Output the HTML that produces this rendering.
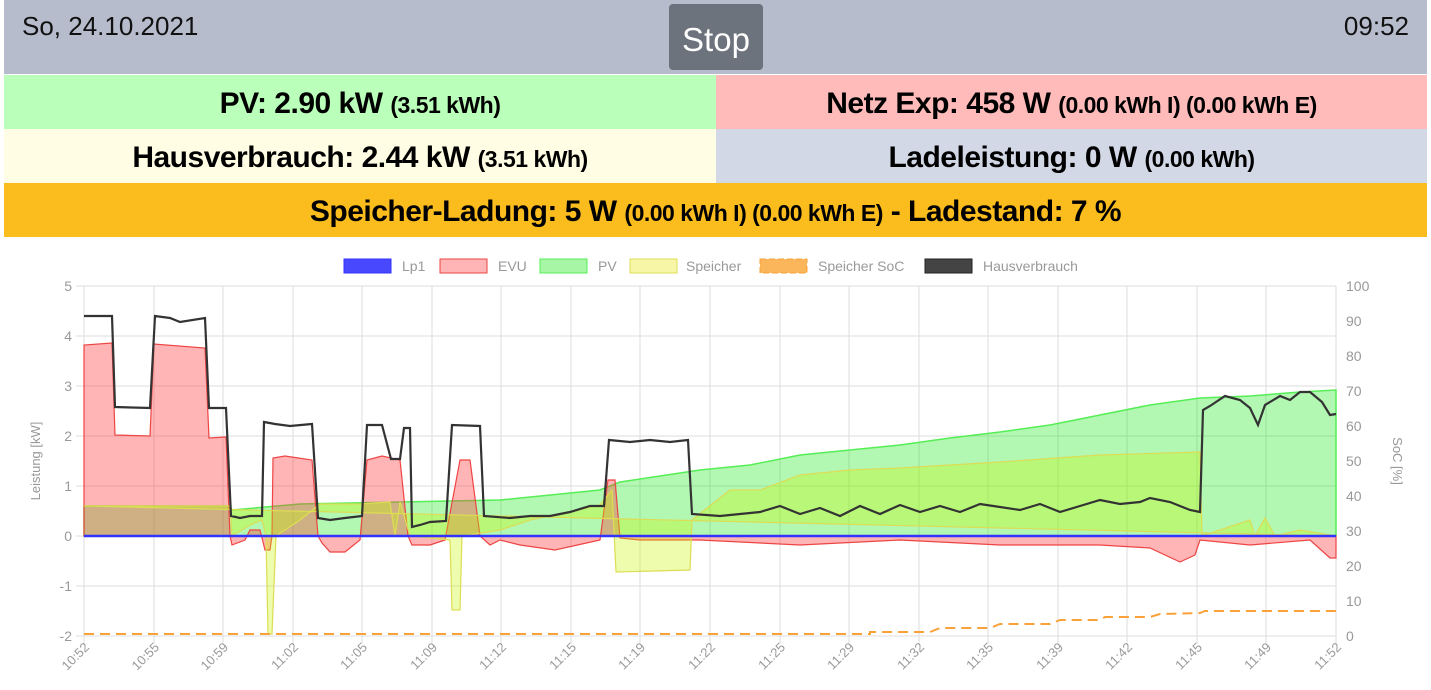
<!DOCTYPE html>
<html><head><meta charset="utf-8"><style>
body{margin:0;width:1431px;height:690px;background:#fff;font-family:"Liberation Sans",sans-serif;overflow:hidden;position:relative}
.top{position:absolute;left:4px;top:0;width:1423px;height:74px;background:#b6bccb}
.date{position:absolute;left:18px;top:11px;font-size:26px;color:#111}
.time{position:absolute;right:18px;top:11px;font-size:26px;color:#111}
.stop{position:absolute;left:665px;top:4px;width:94px;height:66px;background:#6c737c;border-radius:4px;color:#fff;font-size:33px;text-align:center;line-height:72px}
.row{position:absolute;height:54px;font-weight:bold;font-size:30px;text-align:center;line-height:58px;color:#000;letter-spacing:-0.5px}
.row small{font-size:23px}
</style></head><body>
<div class="top"><div class="date">So, 24.10.2021</div><div class="stop">Stop</div><div class="time">09:52</div></div>
<div class="row" style="left:4px;top:75px;width:712px;background:#baffba">PV: 2.90 kW <small>(3.51 kWh)</small></div>
<div class="row" style="left:716px;top:75px;width:711px;background:#ffbaba">Netz Exp: 458 W <small>(0.00 kWh I) (0.00 kWh E)</small></div>
<div class="row" style="left:4px;top:129px;width:712px;background:#fffde4">Hausverbrauch: 2.44 kW <small>(3.51 kWh)</small></div>
<div class="row" style="left:716px;top:129px;width:711px;background:#d3d8e6">Ladeleistung: 0 W <small>(0.00 kWh)</small></div>
<div class="row" style="left:4px;top:183px;width:1423px;background:#fbbd1e">Speicher-Ladung: 5 W <small>(0.00 kWh I) (0.00 kWh E)</small> - Ladestand: 7 %</div>
<svg width="1431" height="690" style="position:absolute;left:0;top:0" font-family="Liberation Sans,sans-serif" font-size="14" fill="#999">
<g stroke="#ddd" stroke-width="1">
<line x1="76" y1="286" x2="1336" y2="286"/><line x1="76" y1="336" x2="1336" y2="336"/><line x1="76" y1="386" x2="1336" y2="386"/><line x1="76" y1="436" x2="1336" y2="436"/><line x1="76" y1="486" x2="1336" y2="486"/><line x1="76" y1="536" x2="1336" y2="536"/><line x1="76" y1="586" x2="1336" y2="586"/><line x1="76" y1="636" x2="1336" y2="636"/>
<line x1="84" y1="286" x2="84" y2="644"/><line x1="154" y1="286" x2="154" y2="644"/><line x1="223" y1="286" x2="223" y2="644"/><line x1="293" y1="286" x2="293" y2="644"/><line x1="362" y1="286" x2="362" y2="644"/><line x1="432" y1="286" x2="432" y2="644"/><line x1="501" y1="286" x2="501" y2="644"/><line x1="571" y1="286" x2="571" y2="644"/><line x1="640" y1="286" x2="640" y2="644"/><line x1="710" y1="286" x2="710" y2="644"/><line x1="780" y1="286" x2="780" y2="644"/><line x1="849" y1="286" x2="849" y2="644"/><line x1="919" y1="286" x2="919" y2="644"/><line x1="988" y1="286" x2="988" y2="644"/><line x1="1058" y1="286" x2="1058" y2="644"/><line x1="1127" y1="286" x2="1127" y2="644"/><line x1="1197" y1="286" x2="1197" y2="644"/><line x1="1266" y1="286" x2="1266" y2="644"/><line x1="1336" y1="286" x2="1336" y2="644"/>
</g>
<path d="M84,506 L230,506 232,510 300,504 400,502 500,500 600,490 620,482 700,470 750,465 800,455 850,450 900,445 950,438 1000,432 1050,425 1100,415 1150,405 1200,398 1250,396 1300,392 1336,390 L1336,536 84,536Z" fill="rgba(0,230,0,0.3)" stroke="#5e5" stroke-width="1.5"/>
<path d="M84,536 L84,345 112,343 115,435 150,436 154,344 205,348 209,438 226,437 230,536 232,545 245,540 250,530 260,530 265,550 270,550 272,536 273,458 285,456 312,460 318,536 322,543 330,552 345,552 360,540 367,460 382,456 400,460 408,536 412,545 430,545 445,540 460,460 470,460 480,536 490,545 500,540 520,545 555,550 600,540 608,480 615,480 620,538 640,540 700,540 800,545 900,540 1000,545 1100,545 1150,548 1180,562 1195,555 1200,540 1250,545 1310,540 1330,558 1336,558 1336,536Z" fill="rgba(255,60,60,0.38)" stroke="#e44" stroke-width="1.2"/>
<path d="M84,506 L230,506 232,536 250,525 262,520 266,536 268,634 272,634 276,536 300,520 320,504 360,504 390,502 395,536 400,502 410,536 450,540 452,610 460,610 462,536 500,530 530,520 600,505 612,490 616,572 690,570 692,520 730,490 760,490 800,475 850,470 900,468 1000,462 1100,455 1200,452 1202,536 1250,520 1255,536 1265,518 1275,536 1300,530 1336,536Z" fill="rgba(200,250,0,0.32)" stroke="#dd5" stroke-width="1.2"/>
<path d="M84,634 L870,634 870,632 930,632 940,628 990,628 1000,624 1050,624 1060,620 1100,620 1105,617 1150,617 1160,614 1200,613 1205,611 1336,611" fill="none" stroke="#f9a23a" stroke-width="2" stroke-dasharray="10,6"/>
<line x1="84" y1="536" x2="1336" y2="536" stroke="#33f" stroke-width="2.5"/>
<path d="M84,316 L112,316 115,407 150,408 155,316 170,318 180,322 205,318 209,408 226,408 231,516 240,518 250,516 262,516 264,422 275,424 290,426 312,424 318,518 330,520 345,518 362,516 367,425 382,425 391,459 400,459 404,428 410,428 412,527 420,525 430,522 446,521 452,425 480,426 484,516 510,518 530,516 550,516 570,512 590,506 604,506 609,440 630,442 650,440 670,442 688,440 692,514 720,516 760,512 780,506 800,514 820,508 840,516 860,506 880,514 900,505 920,512 940,506 960,512 980,504 1000,507 1020,510 1040,504 1060,512 1080,506 1100,500 1120,504 1140,502 1150,498 1170,502 1190,510 1200,512 1203,410 1210,406 1225,396 1240,400 1250,408 1258,425 1265,405 1280,396 1290,400 1300,392 1310,392 1322,402 1330,415 1336,414" fill="none" stroke="#333" stroke-width="2.2"/>
<g text-anchor="end"><text x="72" y="291">5</text><text x="72" y="341">4</text><text x="72" y="391">3</text><text x="72" y="441">2</text><text x="72" y="491">1</text><text x="72" y="541">0</text><text x="72" y="591">-1</text><text x="72" y="641">-2</text></g>
<g><text x="1346" y="291">100</text><text x="1346" y="326">90</text><text x="1346" y="361">80</text><text x="1346" y="396">70</text><text x="1346" y="431">60</text><text x="1346" y="466">50</text><text x="1346" y="501">40</text><text x="1346" y="536">30</text><text x="1346" y="571">20</text><text x="1346" y="606">10</text><text x="1346" y="641">0</text></g>
<text transform="translate(40,461) rotate(-90)" text-anchor="middle" font-size="13">Leistung [kW]</text>
<text transform="translate(1393,461) rotate(90)" text-anchor="middle" font-size="13">SoC [%]</text>
<g font-size="13" text-anchor="end">
<text transform="translate(90,648) rotate(-45)">10:52</text><text transform="translate(160,648) rotate(-45)">10:55</text><text transform="translate(229,648) rotate(-45)">10:59</text><text transform="translate(299,648) rotate(-45)">11:02</text><text transform="translate(368,648) rotate(-45)">11:05</text><text transform="translate(438,648) rotate(-45)">11:09</text><text transform="translate(507,648) rotate(-45)">11:12</text><text transform="translate(577,648) rotate(-45)">11:15</text><text transform="translate(646,648) rotate(-45)">11:19</text><text transform="translate(716,648) rotate(-45)">11:22</text><text transform="translate(786,648) rotate(-45)">11:25</text><text transform="translate(855,648) rotate(-45)">11:29</text><text transform="translate(925,648) rotate(-45)">11:32</text><text transform="translate(994,648) rotate(-45)">11:35</text><text transform="translate(1064,648) rotate(-45)">11:39</text><text transform="translate(1133,648) rotate(-45)">11:42</text><text transform="translate(1203,648) rotate(-45)">11:45</text><text transform="translate(1272,648) rotate(-45)">11:49</text><text transform="translate(1342,648) rotate(-45)">11:52</text>
</g>
<g font-size="14">
<rect x="344" y="259" width="47" height="14" fill="rgba(40,40,255,0.85)" stroke="#33f"/><text x="402" y="271">Lp1</text>
<rect x="440" y="259" width="47" height="14" fill="rgba(255,60,60,0.38)" stroke="#e44"/><text x="498" y="271">EVU</text>
<rect x="540" y="259" width="47" height="14" fill="rgba(0,230,0,0.35)" stroke="#5e5"/><text x="598" y="271">PV</text>
<rect x="630" y="259" width="47" height="14" fill="rgba(230,230,0,0.35)" stroke="#dd5"/><text x="686" y="271">Speicher</text>
<rect x="760" y="259" width="47" height="14" fill="#fbb55a" stroke="#f9a23a" stroke-dasharray="6,3"/><text x="818" y="271">Speicher SoC</text>
<rect x="925" y="259" width="47" height="14" fill="#444" stroke="#222"/><text x="983" y="271">Hausverbrauch</text>
</g>
</svg>
</body></html>
